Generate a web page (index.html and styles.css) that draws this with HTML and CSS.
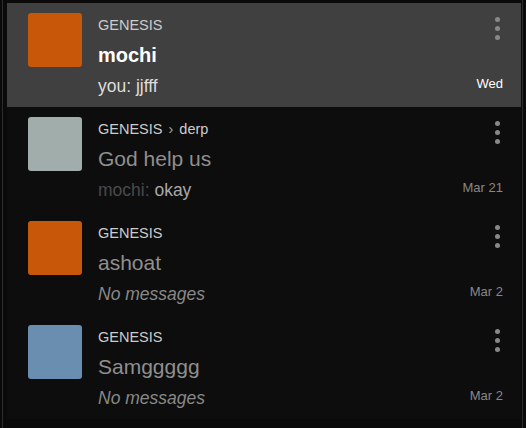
FILE: index.html
```html
<!DOCTYPE html>
<html lang="en">
<head>
  <meta charset="UTF-8" />
  <title>Chats</title>
  <link rel="stylesheet" href="styles.css">
</head>
<body>
  <div class="frame">
    <div class="list">

      <div class="thread active">
        <div class="avatar" style="background:#c9570a"></div>
        <div class="info">
          <div class="community">GENESIS</div>
          <div class="name">mochi</div>
          <div class="last">you: jjfff</div>
        </div>
        <div class="side">
          <div class="dots"><span></span><span></span><span></span></div>
          <div class="date">Wed</div>
        </div>
      </div>

      <div class="thread">
        <div class="avatar" style="background:#a0adaa"></div>
        <div class="info">
          <div class="community">GENESIS <span class="chev">&rsaquo;</span> derp</div>
          <div class="name">God help us</div>
          <div class="last"><span class="author">mochi:</span> okay</div>
        </div>
        <div class="side">
          <div class="dots"><span></span><span></span><span></span></div>
          <div class="date">Mar 21</div>
        </div>
      </div>

      <div class="thread">
        <div class="avatar" style="background:#c9570a"></div>
        <div class="info">
          <div class="community">GENESIS</div>
          <div class="name">ashoat</div>
          <div class="last empty">No messages</div>
        </div>
        <div class="side">
          <div class="dots"><span></span><span></span><span></span></div>
          <div class="date">Mar 2</div>
        </div>
      </div>

      <div class="thread">
        <div class="avatar" style="background:#6a8eb0"></div>
        <div class="info">
          <div class="community">GENESIS</div>
          <div class="name">Samggggg</div>
          <div class="last empty">No messages</div>
        </div>
        <div class="side">
          <div class="dots"><span></span><span></span><span></span></div>
          <div class="date">Mar 2</div>
        </div>
      </div>

    </div>
  </div>
</body>
</html>
```

FILE: styles.css
```css
* {
  box-sizing: border-box;
}

body {
  margin: 0;
  background: #0a0a0a;
  font-family: 'Liberation Sans', Arial, sans-serif;
  color: #ddd;
}

.frame {
  height: 428px;
  margin-left: 2px;
  margin-right: 3px;
  border-left: 1px solid #2c2c2c;
  border-right: 1px solid #2c2c2c;
  padding: 3px 1px 0 4px;
}

.list {
  background: #0d0d0d;
}

.thread {
  display: flex;
  height: 104px;
  padding: 10px 18px 0 21px;
}

.thread.active {
  background: #404040;
}

.avatar {
  width: 54px;
  height: 54px;
  border-radius: 3px;
  flex-shrink: 0;
}

.info {
  flex: 1;
  margin-left: 16px;
  padding-top: 2px;
}

.community {
  font-size: 14.5px;
  line-height: 20px;
  color: #ccc;
}

.chev {
  color: #aaa;
  padding: 0 2px;
}

.name {
  font-size: 21px;
  line-height: 30px;
  margin-top: 5px;
  color: #8f8f8f;
}

.active .name {
  color: #fff;
  font-weight: bold;
  font-size: 20px;
}

.last {
  font-size: 17.5px;
  line-height: 24px;
  margin-top: 4px;
  color: #a8a8a8;
}

.active .last {
  color: #ddd;
}

.author {
  color: #4a4a4a;
}

.empty {
  font-style: italic;
  color: #888;
}

.side {
  display: flex;
  flex-direction: column;
  align-items: flex-end;
  justify-content: space-between;
  height: 83px;
}

.dots {
  display: flex;
  flex-direction: column;
  gap: 4px;
  padding: 4px 3px 0 0;
}

.dots span {
  width: 5px;
  height: 5px;
  border-radius: 50%;
  background: #888;
}

.date {
  font-size: 13px;
  line-height: 16px;
  color: #888;
  padding-bottom: 4px;
}

.active .date {
  color: #fff;
}
```
